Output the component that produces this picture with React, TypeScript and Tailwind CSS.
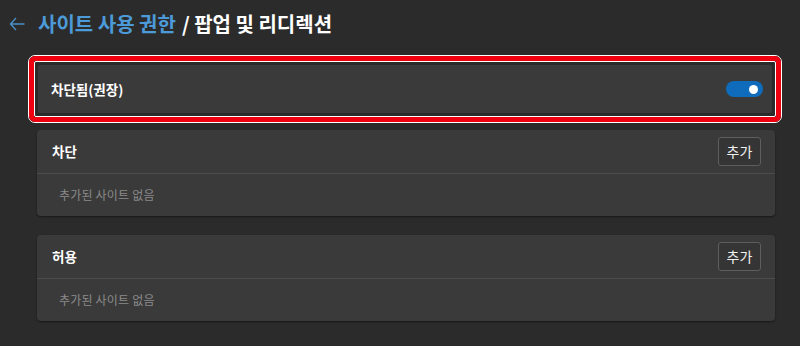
import React from 'react';

const font = { fontFamily: '"Noto Sans CJK KR", "Noto Sans", sans-serif' };

function SiteListCard({ title }: { title: string }) {
  return (
    <div className="ml-[37px] w-[738px] rounded-[4px] bg-[#3a3a3a] shadow-[0_1px_2px_rgba(0,0,0,0.45)]">
      <div className="flex h-[43px] items-center justify-between pl-[15px] pr-[14px]">
        <span className="text-[13.5px] font-bold text-white">{title}</span>
        <button className="flex h-[29px] w-[43px] items-center justify-center rounded-[3px] border border-[#5e5e5e] bg-[#353535] text-[14px] text-[#f0f0f0]">
          추가
        </button>
      </div>
      <div className="h-px bg-[#4c4c4c]" />
      <div className="flex h-[42px] items-center pl-[22px]">
        <span className="text-[12px] tracking-[0.2px] text-[#8a8a8a]">추가된 사이트 없음</span>
      </div>
    </div>
  );
}

export default function App() {
  return (
    <div className="h-[346px] w-[800px] overflow-hidden bg-[#2b2b2b]" style={font}>
      {/* Header */}
      <div className="flex h-[46px] items-center pl-[9px] pt-[2px]">
        <svg width="16" height="14" viewBox="0 0 16 14" className="mr-[13px]">
          <path d="M7 1 L1.5 7 L7 13 M1.5 7 H15.5" fill="none" stroke="#4a90c9" strokeWidth="1.3" />
        </svg>
        <span className="text-[20px] font-bold text-[#4c9ad8]">사이트 사용 권한</span>
        <span className="ml-[6px] text-[20px] font-bold text-white">/ 팝업 및 리디렉션</span>
      </div>

      {/* Highlighted blocked toggle */}
      <div className="ml-[28px] mt-[9px] w-[754px] rounded-[7px] border border-white">
        <div className="rounded-[6px] border-[5px] border-[#ee0010]">
          <div className="rounded-[2px] border border-white p-[2px]">
            <div className="flex h-[50px] items-center justify-between rounded-[3px] border border-[#2a2a2a] bg-[#3a3a3a] pl-[13px] pr-[9px]">
              <span className="text-[13.5px] font-bold text-white">차단됨(권장)</span>
              <div className="flex h-[16px] w-[37px] items-center justify-end rounded-full bg-[#0f6cbd] pr-[5px]">
                <div className="h-[9px] w-[9px] rounded-full bg-white" />
              </div>
            </div>
          </div>
        </div>
      </div>

      <div className="mt-[7px]">
        <SiteListCard title="차단" />
      </div>
      <div className="mt-[19px]">
        <SiteListCard title="허용" />
      </div>
    </div>
  );
}
